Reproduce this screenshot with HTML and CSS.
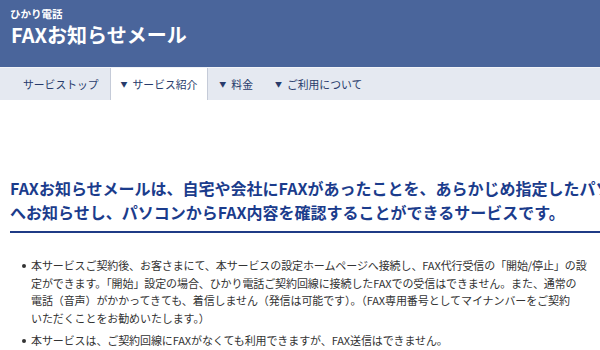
FILE: index.html
```html
<!DOCTYPE html>
<html lang="ja">
<head>
    <meta charset="UTF-8">
    <meta name="viewport" content="width=device-width, initial-scale=1.0">
    <title>FAXお知らせメール</title>

    <link rel="stylesheet" href="styles.css">
</head>
<body>
    <div class="header">
        <div class="serviceName">ひかり電話</div>
        <h1 class="pageTitle">FAXお知らせメール</h1>
    </div>

    <div class="nav">
        <div class="navItem">サービストップ</div>
        <div class="navItem active"><span class="arrow">▼</span>サービス紹介</div>
        <div class="navItem"><span class="arrow">▼</span>料金</div>
        <div class="navItem"><span class="arrow">▼</span>ご利用について</div>
    </div>

    <div class="content">
        <h2 class="lead">FAXお知らせメールは、自宅や会社にFAXがあったことを、あらかじめ指定したパソコン<br>へお知らせし、パソコンからFAX内容を確認することができるサービスです。</h2>

        <ul class="notes">
            <li>本サービスご契約後、お客さまにて、本サービスの設定ホームページへ接続し、FAX代行受信の「開始/停止」の設<br>定ができます。「開始」設定の場合、ひかり電話ご契約回線に接続したFAXでの受信はできません。また、通常の<br>電話（音声）がかかってきても、着信しません（発信は可能です）。（FAX専用番号としてマイナンバーをご契約<br>いただくことをお勧めいたします。）</li>
            <li>本サービスは、ご契約回線にFAXがなくても利用できますが、FAX送信はできません。</li>
        </ul>
    </div>
</body>
</html>
```

FILE: styles.css
```css
html, body {
    overflow: hidden;
}
body {
    margin: 0;
    width: 600px;
    font-family: "Noto Sans CJK JP", "Noto Sans", sans-serif;
    background-color: #fff;
}
.header {
    height: 67px;
    padding: 0 10px;
    box-sizing: border-box;
    background-color: #4a659b;
    color: #fff;
}
.serviceName {
    padding-top: 7px;
    font-size: 10.5px;
    font-weight: bold;
    line-height: 14px;
}
.pageTitle {
    margin: 2px 0 0 1px;
    font-size: 20px;
    font-weight: bold;
    line-height: 24px;
}
.nav {
    display: flex;
    height: 33px;
    padding-left: 12px;
    box-sizing: border-box;
    border-top: 1px solid #f2f4f8;
    background-color: #e5e9f1;
}
.navItem {
    display: flex;
    align-items: center;
    padding: 0 10px;
    font-size: 10.8px;
    color: #283b6b;
    border-left: 1px solid transparent;
    border-right: 1px solid transparent;
}
.navItem.active {
    background-color: #fff;
    border-left-color: #c5cbd8;
    border-right-color: #c5cbd8;
}
.arrow {
    font-size: 7px;
    margin-right: 5px;
}
.content {
    padding: 0 10px;
}
.lead {
    margin: 76px 0 0;
    padding-bottom: 7px;
    white-space: nowrap;
    font-size: 16px;
    font-weight: bold;
    line-height: 24px;
    color: #1b3c8c;
    border-bottom: 2px solid #1f3b86;
    width: 600px;
}
.notes {
    list-style: none;
    margin: 24px 0 0;
    padding: 0 0 0 21px;
    font-size: 11px;
    letter-spacing: -0.1px;
    line-height: 17.5px;
    color: #333;
}
.notes li {
    position: relative;
    margin-bottom: 5px;
}
.notes li::before {
    content: "";
    position: absolute;
    left: -9px;
    top: 7px;
    width: 4px;
    height: 4px;
    border-radius: 50%;
    background-color: #333;
}
```
